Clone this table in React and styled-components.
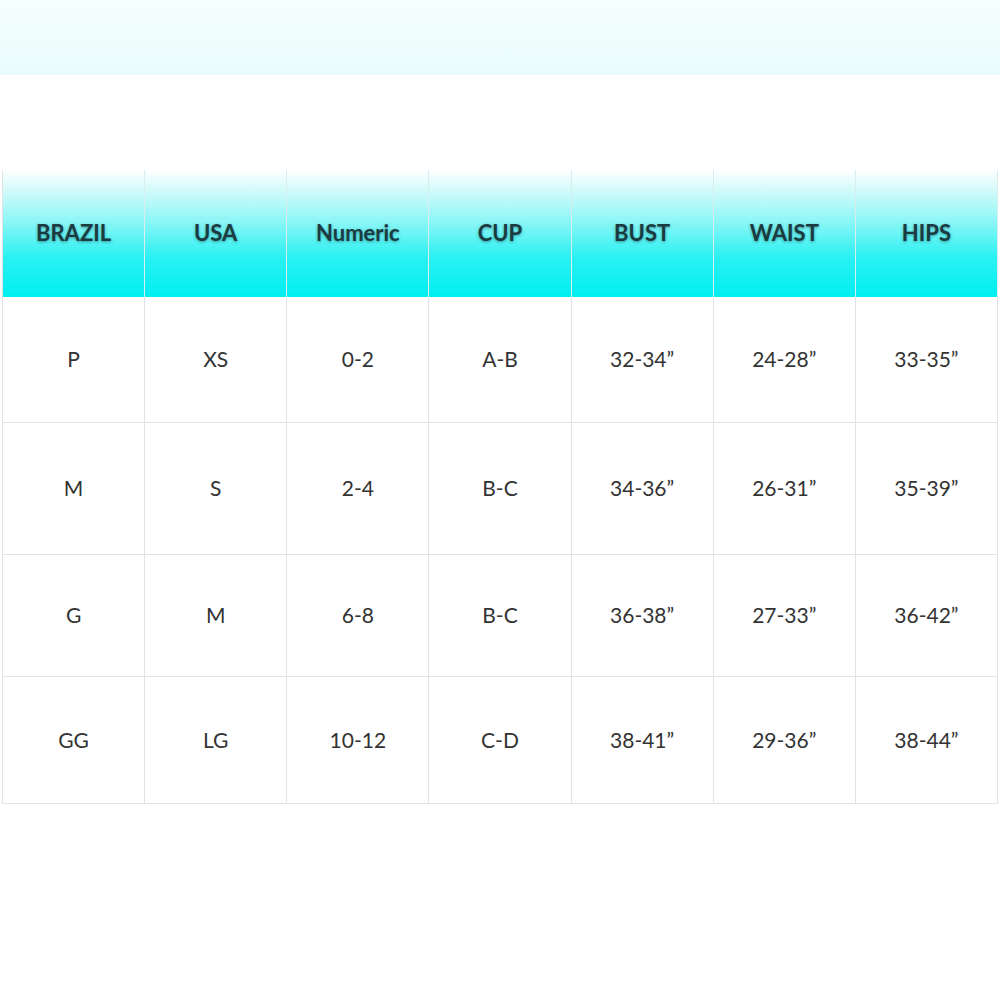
import React from "react";
import styled, { createGlobalStyle } from "styled-components";

const Global = createGlobalStyle`
  html, body { margin: 0; padding: 0; background: #ffffff; }
  body { font-family: "Lato", "Open Sans", sans-serif; }
`;

const Page = styled.div`
  width: 1000px;
  height: 1000px;
  background: #ffffff;
  display: flex;
  flex-direction: column;
  overflow: hidden;
`;

const TopBand = styled.div`
  height: 75px;
  flex-shrink: 0;
  background: linear-gradient(to bottom, #f4fefe 0%, #effdfd 60%, #e9fcfc 100%);
`;

const Table = styled.div`
  margin: 95px 2px 0 2px;
  display: grid;
  grid-template-columns: repeat(7, 1fr);
  grid-template-rows: 127px 126px 132px 122px 127px;
  border-left: 1px solid #e2e2e2;
`;

const HeadCell = styled.div`
  display: flex;
  align-items: center;
  justify-content: center;
  border-right: 1px solid #d8eeee;
  background: linear-gradient(
    to bottom,
    #ffffff 0%,
    #d8fbfb 14%,
    #8ef6f6 40%,
    #2cf1f2 68%,
    #00eff1 100%
  );
  font-size: 22px;
  font-weight: 700;
  color: #1a3b40;
  text-shadow: 0 1px 3px rgba(10, 60, 70, 0.5);
  padding-bottom: 3px;
`;

const Cell = styled.div`
  display: flex;
  align-items: center;
  justify-content: center;
  border-right: 1px solid #e2e2e2;
  border-bottom: 1px solid #e2e2e2;
  font-size: 21px;
  font-weight: 400;
  color: #333333;
  padding-bottom: 2px;
`;

const headers = ["BRAZIL", "USA", "Numeric", "CUP", "BUST", "WAIST", "HIPS"];
const rows = [
  ["P", "XS", "0-2", "A-B", "32-34\u201d", "24-28\u201d", "33-35\u201d"],
  ["M", "S", "2-4", "B-C", "34-36\u201d", "26-31\u201d", "35-39\u201d"],
  ["G", "M", "6-8", "B-C", "36-38\u201d", "27-33\u201d", "36-42\u201d"],
  ["GG", "LG", "10-12", "C-D", "38-41\u201d", "29-36\u201d", "38-44\u201d"],
];

export default function App() {
  return (
    <Page>
      <Global />
      <TopBand />
      <Table>
        {headers.map((h) => (
          <HeadCell key={h}>{h}</HeadCell>
        ))}
        {rows.map((r, i) =>
          r.map((c, j) => <Cell key={`${i}-${j}`}>{c}</Cell>)
        )}
      </Table>
    </Page>
  );
}
